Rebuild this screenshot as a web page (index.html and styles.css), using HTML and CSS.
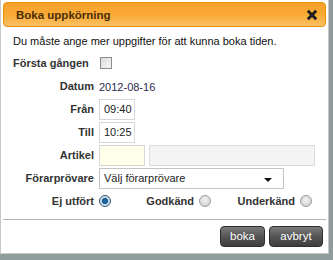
FILE: index.html
```html
<!DOCTYPE html>
<html>
<head>
<meta charset="utf-8">
<link rel="stylesheet" href="styles.css">
</head>
<body>
<div class="dialog">
  <div class="titlebar">
    <span class="title">Boka uppkörning</span>
    <svg class="close" width="10" height="10" viewBox="0 0 10 10"><path d="M1.8 1.8 L8.2 8.2 M8.2 1.8 L1.8 8.2" stroke="#1e1e1e" stroke-width="3" stroke-linecap="square"/></svg>
  </div>
  <div class="content">
    <p class="intro">Du måste ange mer uppgifter för att kunna boka tiden.</p>
    <div class="form">
      <span class="lbl first">Första gången</span>
      <span class="val"><span class="checkbox"></span></span>

      <span class="lbl">Datum</span>
      <span class="val text">2012-08-16</span>

      <span class="lbl">Från</span>
      <span class="val"><span class="input time">09:40</span></span>

      <span class="lbl">Till</span>
      <span class="val"><span class="input time">10:25</span></span>

      <span class="lbl">Artikel</span>
      <span class="val"><span class="input art1"></span><span class="input art2"></span></span>

      <span class="lbl">Förarprövare</span>
      <span class="val"><span class="input select">Välj förarprövare<span class="arrow"></span></span></span>
    </div>
    <div class="radios">
      <span class="rcell"><span class="rlbl">Ej utfört</span><span class="radio on"></span></span>
      <span class="rcell"><span class="rlbl">Godkänd</span><span class="radio"></span></span>
      <span class="rcell"><span class="rlbl">Underkänd</span><span class="radio"></span></span>
    </div>
  </div>
  <div class="buttons">
    <span class="btn boka">boka</span>
    <span class="btn avbryt">avbryt</span>
  </div>
</div>
</body>
</html>
```
FILE: styles.css
```css
html, body {
  margin: 0;
  padding: 0;
}
body {
  background: #8e9c9c;
  width: 333px;
  height: 260px;
  overflow: hidden;
  font-family: "Liberation Sans", Arial, sans-serif;
  font-size: 11px;
  color: #222;
}
.dialog {
  box-sizing: border-box;
  width: 329px;
  height: 254px;
  background: #fff;
  border: 1px solid #c8c8c8;
  border-top: none;
  padding: 2px 2px 0 2px;
  display: flex;
  flex-direction: column;
}
.titlebar {
  box-sizing: border-box;
  height: 25px;
  border: 1px solid #e78f08;
  border-radius: 4px;
  background: linear-gradient(to bottom, #f7a12a 0%, #f9aa35 50%, #fcc063 100%);
  display: flex;
  align-items: center;
  justify-content: space-between;
  padding: 0 8px 0 12px;
}
.title {
  font-weight: bold;
  font-size: 11.5px;
  color: #4a2e06;
}
.close {
  display: block;
  margin-top: 1px;
}
.content {
  padding: 0 0 0 10px;
}
.intro {
  margin: 8px 0 0 0;
  font-size: 11px;
  line-height: 13px;
  color: #111;
}
.form {
  display: grid;
  grid-template-columns: 81px 1fr;
  column-gap: 5px;
  row-gap: 2px;
  margin-top: 7px;
}
.lbl {
  font-weight: bold;
  text-align: right;
  color: #333;
  height: 21px;
  line-height: 21px;
}
.lbl.first {
  text-align: left;
  white-space: nowrap;
  line-height: 14px;
  height: 14px;
  padding-top: 1px;
}
.val {
  display: flex;
  align-items: center;
  gap: 4px;
  height: 21px;
}
.val.text {
  color: #2a2a4a;
}
.form .val:nth-child(2) {
  height: 19px;
  align-items: flex-start;
  padding-top: 2px;
  box-sizing: border-box;
}
.checkbox {
  box-sizing: border-box;
  width: 12px;
  height: 12px;
  border: 1px solid #8c8c8c;
  background: linear-gradient(to bottom right, #dcdcdc, #f6f6f6);
  margin-left: 1px;
}
.input {
  box-sizing: border-box;
  height: 21px;
  border: 1px solid #d6d6d6;
  background: #fff;
  line-height: 19px;
  padding-left: 4px;
  color: #222;
  position: relative;
}
.input.time {
  width: 36px;
}
.input.art1 {
  width: 46px;
  background: #ffffea;
}
.input.art2 {
  width: 166px;
  background: #f4f4f4;
  border-color: #dcdcdc;
}
.input.select {
  width: 185px;
  border-color: #c4c4c4;
}
.arrow {
  position: absolute;
  right: 11px;
  top: 9px;
  width: 0;
  height: 0;
  border-left: 4px solid transparent;
  border-right: 4px solid transparent;
  border-top: 4px solid #111;
}
.radios {
  display: grid;
  grid-template-columns: 98px 100px 101px;
  margin-top: 1px;
  height: 21px;
}
.rcell {
  display: flex;
  justify-content: flex-end;
  align-items: center;
  gap: 5px;
}
.rlbl {
  font-weight: bold;
  color: #333;
}
.radio {
  box-sizing: border-box;
  width: 12px;
  height: 12px;
  border-radius: 50%;
  border: 1px solid #9a9a9a;
  background: radial-gradient(circle at 50% 40%, #f4f4f4 0%, #d4d4d4 70%, #c4c4c4 100%);
}
.radio.on {
  border-color: #2a5a7a;
  background: radial-gradient(circle at 50% 50%, #1d6fb0 0%, #1a5a90 40%, #c8d4dc 45%, #e8ecee 100%);
}
.buttons {
  margin-top: 8px;
  border-top: 1px solid #b4b4b4;
  display: flex;
  justify-content: flex-end;
  gap: 4px;
  padding-top: 6px;
  padding-right: 3px;
}
.btn {
  box-sizing: border-box;
  height: 21px;
  border: 1px solid #2e2e2e;
  border-radius: 4px;
  background: linear-gradient(to bottom, #7a7a7a 0%, #555 50%, #3e3e3e 100%);
  color: #fff;
  font-size: 11.5px;
  line-height: 19px;
  text-align: center;
}
.btn.boka {
  width: 45px;
}
.btn.avbryt {
  width: 54px;
}
```
